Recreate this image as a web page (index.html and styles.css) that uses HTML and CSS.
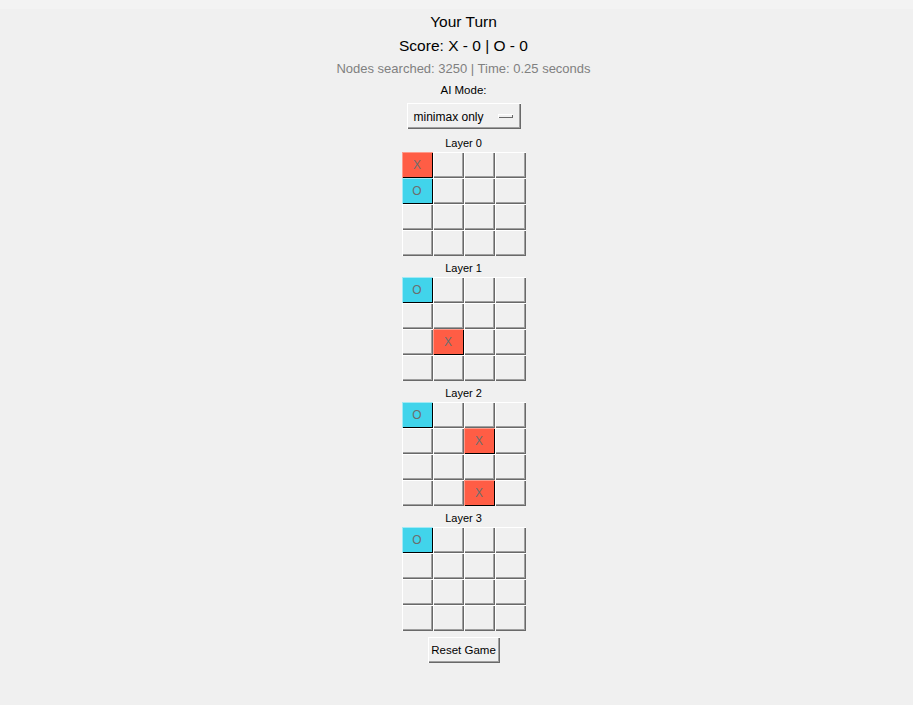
FILE: index.html
```html
<!DOCTYPE html>
<html>
<head>
<meta charset="utf-8">
<link rel="stylesheet" href="styles.css">
</head>
<body>
<div class="topstrip"></div>
<div class="app">
  <div class="title">Your Turn</div>
  <div class="score">Score: X - 0 | O - 0</div>
  <div class="stats">Nodes searched: 3250 | Time: 0.25 seconds</div>
  <div class="label-mode">AI Mode:</div>
  <div class="menubutton"><span class="mb-text">minimax only</span><span class="mb-ind"></span></div>

  <div class="layer">
    <div class="layer-label">Layer 0</div>
    <div class="grid">
      <div class="cell x">X</div><div class="cell"></div><div class="cell"></div><div class="cell"></div>
      <div class="cell o">O</div><div class="cell"></div><div class="cell"></div><div class="cell"></div>
      <div class="cell"></div><div class="cell"></div><div class="cell"></div><div class="cell"></div>
      <div class="cell"></div><div class="cell"></div><div class="cell"></div><div class="cell"></div>
    </div>
  </div>

  <div class="layer">
    <div class="layer-label">Layer 1</div>
    <div class="grid">
      <div class="cell o">O</div><div class="cell"></div><div class="cell"></div><div class="cell"></div>
      <div class="cell"></div><div class="cell"></div><div class="cell"></div><div class="cell"></div>
      <div class="cell"></div><div class="cell x">X</div><div class="cell"></div><div class="cell"></div>
      <div class="cell"></div><div class="cell"></div><div class="cell"></div><div class="cell"></div>
    </div>
  </div>

  <div class="layer">
    <div class="layer-label">Layer 2</div>
    <div class="grid">
      <div class="cell o">O</div><div class="cell"></div><div class="cell"></div><div class="cell"></div>
      <div class="cell"></div><div class="cell"></div><div class="cell x">X</div><div class="cell"></div>
      <div class="cell"></div><div class="cell"></div><div class="cell"></div><div class="cell"></div>
      <div class="cell"></div><div class="cell"></div><div class="cell x">X</div><div class="cell"></div>
    </div>
  </div>

  <div class="layer">
    <div class="layer-label">Layer 3</div>
    <div class="grid">
      <div class="cell o">O</div><div class="cell"></div><div class="cell"></div><div class="cell"></div>
      <div class="cell"></div><div class="cell"></div><div class="cell"></div><div class="cell"></div>
      <div class="cell"></div><div class="cell"></div><div class="cell"></div><div class="cell"></div>
      <div class="cell"></div><div class="cell"></div><div class="cell"></div><div class="cell"></div>
    </div>
  </div>

  <div class="reset">Reset Game</div>
</div>
</body>
</html>
```

FILE: styles.css
```css
html, body {
  margin: 0;
  padding: 0;
  background: #f0f0f0;
  font-family: "Liberation Sans", Arial, sans-serif;
  color: #000;
}
.topstrip {
  height: 9px;
  background: #f3f3f3;
}
.app {
  display: flex;
  flex-direction: column;
  align-items: center;
  padding-left: 14px;
  padding-top: 1px;
}
.title {
  font-size: 15.5px;
  line-height: 24px;
}
.score {
  font-size: 15.5px;
  line-height: 24px;
}
.stats {
  font-size: 13px;
  line-height: 22px;
  color: #808080;
}
.label-mode {
  font-size: 11.5px;
  line-height: 20px;
}
.menubutton {
  margin-top: 3px;
  margin-bottom: 3px;
  width: 114px;
  height: 26px;
  box-sizing: border-box;
  display: flex;
  align-items: center;
  justify-content: space-between;
  padding: 0 8px 0 7px;
  font-size: 12px;
  box-shadow: inset 1px 1px #ffffff, inset -1px -1px #696969, inset -2px -2px #a0a0a0;
}
.mb-text {
  padding-top: 1px;
}
.mb-ind {
  width: 15px;
  height: 4px;
  box-sizing: border-box;
  box-shadow: inset 1px 1px #ffffff, inset -1px -1px #696969;
  background: #f0f0f0;
}
.layer {
  display: flex;
  flex-direction: column;
  align-items: center;
}
.layer-label {
  font-size: 11px;
  line-height: 18px;
  padding-top: 2px;
}
.grid {
  display: grid;
  grid-template-columns: repeat(4, 31px);
  grid-auto-rows: 26px;
  padding-bottom: 1px;
}
.cell {
  box-sizing: border-box;
  display: flex;
  align-items: center;
  justify-content: center;
  font-size: 12px;
  color: #6d6d6d;
  background: #f0f0f0;
  box-shadow: inset 1px 1px #ffffff, inset -1px -1px #696969, inset -2px -2px #a0a0a0;
}
.cell.x {
  background: #ff5d45;
  box-shadow: inset 1px 1px #ff9a8a, inset -1px -1px #000000;
}
.cell.o {
  background: #41d4eb;
  box-shadow: inset 1px 1px #a0eaf5, inset -1px -1px #000000;
}
.reset {
  margin-top: 5px;
  width: 72px;
  height: 26px;
  box-sizing: border-box;
  display: flex;
  align-items: center;
  justify-content: center;
  font-size: 11.5px;
  box-shadow: inset 1px 1px #ffffff, inset -1px -1px #696969, inset -2px -2px #a0a0a0;
}
```
